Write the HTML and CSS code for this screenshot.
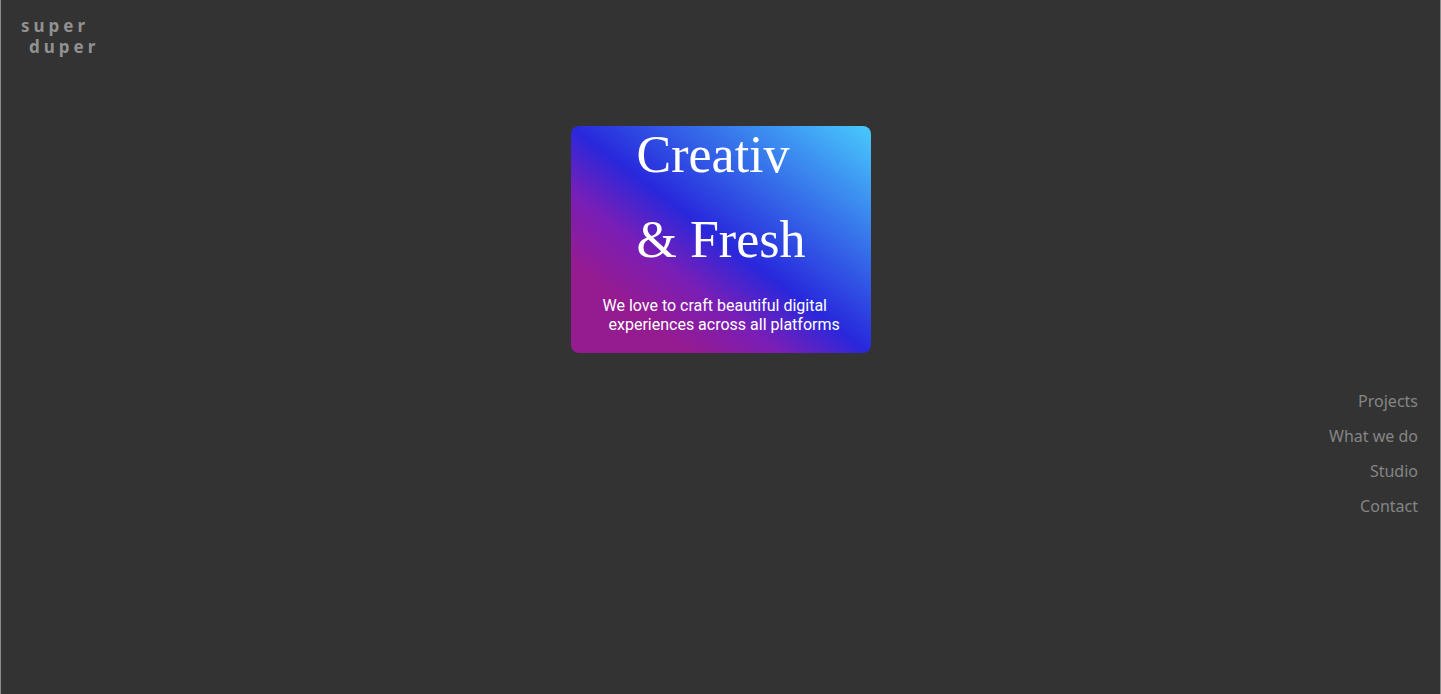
FILE: index.html
```html
<!DOCTYPE html>
<html lang="en">
<head>
<meta charset="utf-8">
<meta name="viewport" content="width=device-width, initial-scale=1">
<title>super duper</title>
<link rel="stylesheet" href="styles.css">
</head>
<body>
<div class="page">
  <header class="header">
    <a class="logo" href="#"><span class="logo-line">super</span><span class="logo-line logo-shift">duper</span></a>
  </header>
  <main class="hero">
    <section class="card">
      <h1 class="title"><span class="title-line">Creativ</span><span class="title-line">&amp; Fresh</span></h1>
      <p class="tagline"><span class="tagline-line">We love to craft beautiful digital</span><span class="tagline-line tagline-shift">experiences across all platforms</span></p>
    </section>
  </main>
  <nav class="nav" aria-label="Main">
    <a class="nav-link" href="#">Projects</a>
    <a class="nav-link" href="#">What we do</a>
    <a class="nav-link" href="#">Studio</a>
    <a class="nav-link" href="#">Contact</a>
  </nav>
</div>
</body>
</html>
```
FILE: styles.css
```css
* {
  box-sizing: border-box;
}

body {
  margin: 0;
  background: #333;
  font-family: "Noto Sans", sans-serif;
  font-size: 16px;
}

.page {
  display: flex;
  flex-direction: column;
  min-height: 100vh;
  border: solid #8c8c8c;
  border-width: 0 1px;
}

.header {
  display: flex;
  padding: 15px 20px;
}

.logo {
  color: #919191;
  font-size: 17px;
  font-weight: 700;
  line-height: 21px;
  letter-spacing: 4px;
  text-decoration: none;
}

.logo-line,
.title-line,
.tagline-line {
  display: block;
}

.logo-shift {
  padding-left: 8px;
}

.hero {
  display: flex;
  justify-content: center;
  padding-top: 54px;
}

.card {
  width: 300px;
  padding-bottom: 19px;
  border-radius: 8px;
  background: linear-gradient(to top right, #951b91 20%, #7a1eb6 35%, #2828dc 50%, #48cafc);
  color: #fff;
}

.title {
  margin: 0;
  padding-left: 66px;
  font-family: "Liberation Serif", serif;
  font-size: 52px;
  font-weight: 400;
  line-height: 85px;
}

.title-line:first-child {
  margin-top: -14px;
}

.tagline {
  margin: 14px 0 0;
  padding-left: 32px;
  font-family: Roboto, sans-serif;
  line-height: 19px;
}

.tagline-shift {
  padding-left: 6px;
}

.nav {
  display: flex;
  flex-direction: column;
  align-items: flex-end;
  gap: 16px;
  padding: 39px 22px 0;
}

.nav-link {
  color: #858585;
  line-height: 19px;
  text-decoration: none;
}
```
